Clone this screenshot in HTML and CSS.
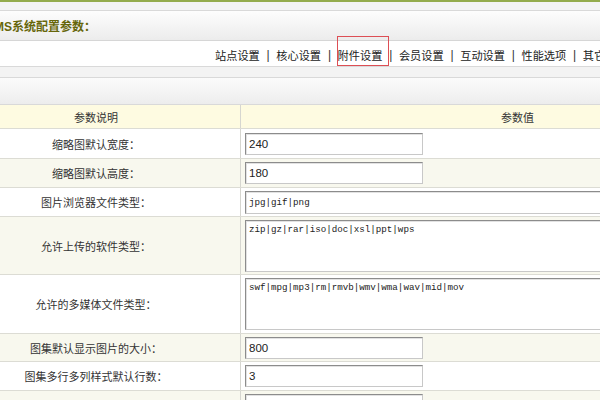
FILE: index.html
```html
<!DOCTYPE html>
<html lang="zh-CN">
<head>
<meta charset="utf-8">
<title>系统配置参数</title>
<link rel="stylesheet" href="styles.css">
</head>
<body>
<div class="page">
  <div class="topline"></div>
  <div class="band"></div>
  <div class="titlebar">DedeCMS系统配置参数：</div>
  <div class="nav">
    <a class="nav-item">站点设置</a><span class="sep">|</span>
    <a class="nav-item">核心设置</a><span class="sep">|</span>
    <a class="nav-item active">附件设置</a><span class="sep">|</span>
    <a class="nav-item">会员设置</a><span class="sep">|</span>
    <a class="nav-item">互动设置</a><span class="sep">|</span>
    <a class="nav-item">性能选项</a><span class="sep">|</span>
    <a class="nav-item">其它选项</a>
  </div>
  <div class="band band-2"></div>
  <div class="toolbar"></div>
  <div class="grid">
    <div class="row head"><div class="label">参数说明</div><div class="value center">参数值</div></div>
    <div class="row h30"><div class="label">缩略图默认宽度：</div><div class="value"><input class="inp" value="240"></div></div>
    <div class="row h29 alt"><div class="label">缩略图默认高度：</div><div class="value"><input class="inp" value="180"></div></div>
    <div class="row h29"><div class="label">图片浏览器文件类型：</div><div class="value"><input class="inp wide mono" value="jpg|gif|png"></div></div>
    <div class="row h58 alt"><div class="label">允许上传的软件类型：</div><div class="value"><textarea class="ta mono">zip|gz|rar|iso|doc|xsl|ppt|wps</textarea></div></div>
    <div class="row h59"><div class="label">允许的多媒体文件类型：</div><div class="value"><textarea class="ta mono">swf|mpg|mp3|rm|rmvb|wmv|wma|wav|mid|mov</textarea></div></div>
    <div class="row h28 alt"><div class="label">图集默认显示图片的大小：</div><div class="value"><input class="inp" value="800"></div></div>
    <div class="row h29"><div class="label">图集多行多列样式默认行数：</div><div class="value"><input class="inp" value="3"></div></div>
    <div class="row h29 alt"><div class="label">图集多行多列样式默认列数：</div><div class="value"><input class="inp" value="4"></div></div>
  </div>
</div>
</body>
</html>
```

FILE: styles.css
```css
html, body {
  margin: 0;
  padding: 0;
  background: #fff;
  overflow: hidden;
}
body {
  font-family: "Noto Sans CJK SC", "Liberation Sans", sans-serif;
  font-size: 11px;
  color: #333;
}
.page {
  width: 842px;
  margin-left: -48px;
}
.topline {
  height: 2px;
  background: #93ab4c;
}
.band {
  height: 8px;
  background: #f3f3f3;
  border-bottom: 1px solid #d9d9d9;
}
.band-2 {
  height: 10px;
}
.titlebar {
  height: 30px;
  box-sizing: border-box;
  padding-left: 4px;
  display: flex;
  align-items: center;
  background: linear-gradient(#fdfdfd, #ececec);
  border-bottom: 1px solid #d6d6d6;
  font-family: "Liberation Sans", "Noto Sans CJK SC", sans-serif;
  font-weight: bold;
  font-size: 12px;
  color: #66660a;
}
.nav {
  height: 26px;
  box-sizing: border-box;
  background: #fff;
  border-bottom: 1px solid #d9d9d9;
  display: flex;
  align-items: center;
  padding-left: 263px;
  padding-top: 3px;
  white-space: nowrap;
  color: #222;
}
.nav-item {
  width: 45px;
  font-size: 11.2px;
  color: #222;
  position: relative;
}
.sep {
  width: 16.3px;
  text-align: center;
  font-family: "Liberation Sans", sans-serif;
  font-size: 12px;
  color: #333;
}
.nav-item.active::after {
  content: "";
  position: absolute;
  left: -1px;
  top: -11px;
  width: 50px;
  height: 28px;
  border: 1px solid #dd4f55;
}
.toolbar {
  height: 26px;
  background: linear-gradient(#fbfbfb, #ededed);
  border-bottom: 1px solid #d9d9d9;
}
.grid {
  display: flex;
  flex-direction: column;
}
.row {
  display: grid;
  grid-template-columns: 289px 1fr;
  box-sizing: border-box;
  border-bottom: 1px solid #dcdcd4;
  background: #fff;
}
.row.alt {
  background: #f8f8ee;
}
.row.head {
  height: 24px;
  background: #fefbe1;
}
.h30 { height: 30px; }
.h29 { height: 29px; }
.h28 { height: 28px; }
.h58 { height: 58px; }
.h59 { height: 59px; }
.label {
  border-right: 1px solid #d6d6d0;
  display: flex;
  align-items: center;
  justify-content: center;
  color: #333;
}
.value {
  display: flex;
  align-items: center;
  padding-left: 4px;
}
.value.center {
  justify-content: center;
  padding-left: 0;
}
.inp {
  box-sizing: border-box;
  width: 178px;
  height: 22px;
  margin: 0;
  padding: 0 3px;
  border: 1px solid #c8c8c8;
  border-top-color: #8c8c8c;
  border-left-color: #8c8c8c;
  box-shadow: inset 1px 1px 0 #e2e2e2;
  background: #fff;
  font-family: "Liberation Sans", sans-serif;
  font-size: 11.5px;
  color: #222;
  outline: none;
}
.inp.wide {
  width: 520px;
  height: 23px;
}
.mono {
  font-family: "Liberation Mono", monospace;
  font-size: 9.2px;
  color: #222;
}
.ta {
  box-sizing: border-box;
  width: 520px;
  height: 52px;
  margin: 0;
  padding: 3px 3px;
  border: 1px solid #c8c8c8;
  border-top-color: #8c8c8c;
  border-left-color: #8c8c8c;
  box-shadow: inset 1px 1px 0 #e2e2e2;
  background: #fff;
  resize: none;
  outline: none;
  overflow: hidden;
}
```
